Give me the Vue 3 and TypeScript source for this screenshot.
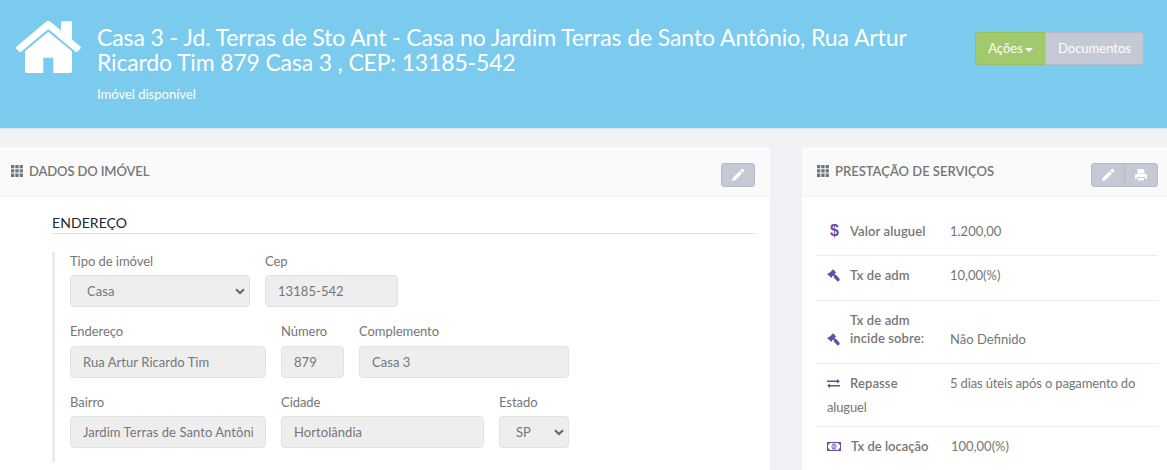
<template>
  <div class="page">
    <header class="hero">
      <svg class="hero-icon" viewBox="0 0 66 53" width="66" height="53" fill="#fff">
        <path d="M1.300 25.800 30.800 .9Q33.300 -.9 35.800 .9L46 9.400V1.500Q46 .2 47.300 .2H55.700Q57 .2 57 1.500V18.600L65.400 25.600Q66.300 26.500 65.500 27.400L62.300 30.700Q61.300 31.500 60.200 30.600L34.500 9Q33.300 8 32.100 9L6.400 30.600Q5.300 31.500 4.300 30.700L1 27.400Q.3 26.600 1.300 25.800Z" />
        <path d="M33.300 10.800 57 30.200V50.300Q57 52 55.300 52H38.300V36.700H28.300V52H11.700Q10 52 10 50.300V30.200Z" />
      </svg>
      <div class="hero-text">
        <h1>
          <span class="l1">Casa 3 - Jd. Terras de Sto Ant - Casa no Jardim Terras de Santo Antônio, Rua Artur</span><br>
          <span class="l2">Ricardo Tim 879 Casa 3 , CEP: 13185-542</span>
        </h1>
        <p>Imóvel disponível</p>
      </div>
      <div class="btn-group hero-actions">
        <button class="btn btn-success" type="button">Ações<i class="caret" /></button>
        <button class="btn btn-default" type="button">Documentos</button>
      </div>
    </header>

    <main class="columns">
      <section class="panel">
        <div class="panel-heading">
          <svg class="grid-icon" viewBox="0 0 12 12" width="12" height="12"><path :d="gridPath" /></svg>
          <h2 class="t-dados">DADOS DO IMÓVEL</h2>
          <div class="btn-group tools">
            <button class="btn btn-default btn-icon" type="button">
              <svg viewBox="0 0 14 14" width="14" height="14"><path :d="pencilPath" /></svg>
            </button>
          </div>
        </div>
        <div class="panel-body">
          <h3><span>ENDEREÇO</span></h3>
          <div class="address">
            <div v-for="(row, r) in rows" :key="r" class="form-row">
              <div v-for="field in row" :key="field.label" class="field" :style="{ width: field.width + 'px' }">
                <label>{{ field.label }}</label>
                <div v-if="field.select" class="control select">
                  <span>{{ field.value }}</span>
                  <svg viewBox="0 0 10 7" width="10" height="7"><path d="M1 1.200 5 5 9 1.200" /></svg>
                </div>
                <input v-else class="control" type="text" readonly :value="field.value">
              </div>
            </div>
          </div>
        </div>
      </section>

      <section class="panel panel-side">
        <div class="panel-heading">
          <svg class="grid-icon" viewBox="0 0 12 12" width="12" height="12"><path :d="gridPath" /></svg>
          <h2>PRESTAÇÃO DE SERVIÇOS</h2>
          <div class="btn-group tools">
            <button class="btn btn-default btn-icon" type="button">
              <svg viewBox="0 0 14 14" width="14" height="14"><path :d="pencilPath" /></svg>
            </button>
            <button class="btn btn-default btn-icon" type="button">
              <svg viewBox="0 0 14 14" width="14" height="14"><path fill-rule="evenodd" d="M3.500 1H9L10.500 2.500V5.500H3.500ZM2 6H12Q13 6 13 7V11H11V9H3V11H1V7Q1 6 2 6ZM4 10H10V12.500H4Z" /></svg>
            </button>
          </div>
        </div>
        <ul class="services">
          <li v-for="item in services" :key="item.label" :class="'item-' + item.icon">
            <span class="icon">
              <template v-if="item.icon === 'dollar'">$</template>
              <svg v-else-if="item.icon === 'money'" viewBox="0 0 14 9" width="14" height="9">
                <path fill-rule="evenodd" d="M0 0H14V9H0ZM1 2.700V6.300Q2.700 6.300 2.700 8H11.300Q11.300 6.300 13 6.300V2.700Q11.300 2.700 11.300 1H2.700Q2.700 2.700 1 2.700Z" />
                <path fill-rule="evenodd" d="M7 1.400A2.400 3.100 0 0 1 7 7.600A2.400 3.100 0 0 1 7 1.400ZM7 2.200A1.700 2.300 0 0 0 7 6.800A1.700 2.300 0 0 0 7 2.200ZM6.500 2.800H7.500V6.200H6.500Z" />
              </svg>
              <svg v-else-if="item.icon === 'exchange'" viewBox="0 0 13 9" width="13" height="9">
                <path d="M0 1.600H10V0L13 2.300 10 4.600V3H0ZM13 6H3V4.400L0 6.700 3 9V7.400H13Z" />
              </svg>
              <svg v-else viewBox="0 0 13 13" width="13" height="13">
                <path d="M5.300 .5 6.500 .7 9 3.200 8.600 4.300 8.100 4.200 7.500 5 8.500 6 9.200 5.900 12.600 9.800Q13 11 12 12 11 12.600 10 12L6.900 8.500 7 7.500 6.200 6.600 4.900 7.500 5.100 8.200 4.200 8.700 .5 5.400 .8 4.300 1.800 4.300 5.100 1.400Z" />
              </svg>
            </span><strong>{{ item.label }}</strong><span class="value">{{ item.value }}</span>
          </li>
        </ul>
      </section>
    </main>
  </div>
</template>

<script setup lang="ts">
// --- TYPES ---
type Field = {
  label: string
  value: string
  width: number
  select?: boolean
}

type Service = {
  icon: 'dollar' | 'gavel' | 'gavel-tall' | 'exchange' | 'money'
  label: string
  value: string
}

// --- ICONS ---
const gridPath = [0, 4.3, 8.6]
  .flatMap(y => [0, 4.3, 8.6].map(x => `M${x} ${y}h3.3v3.3h-3.3Z`))
  .join('')
const pencilPath = 'M1 13 1.800 9.700 8.600 2.900 11.100 5.400 4.300 12.200ZM9.300 2.200 10.500 1Q11.200 .5 11.900 1L13 2.100Q13.500 2.800 13 3.500L11.800 4.700Z'

// --- DATA ---
const rows: Field[][] = [
  [
    { label: 'Tipo de imóvel', value: 'Casa', width: 180, select: true },
    { label: 'Cep', value: '13185-542', width: 133 },
  ],
  [
    { label: 'Endereço', value: 'Rua Artur Ricardo Tim', width: 196 },
    { label: 'Número', value: '879', width: 63 },
    { label: 'Complemento', value: 'Casa 3', width: 210 },
  ],
  [
    { label: 'Bairro', value: 'Jardim Terras de Santo Antônio', width: 196 },
    { label: 'Cidade', value: 'Hortolândia', width: 203 },
    { label: 'Estado', value: 'SP', width: 70, select: true },
  ],
]

const services: Service[] = [
  { icon: 'dollar', label: 'Valor aluguel', value: '1.200,00' },
  { icon: 'gavel', label: 'Tx de adm', value: '10,00(%)' },
  { icon: 'gavel-tall', label: 'Tx de adm incide sobre:', value: 'Não Definido' },
  { icon: 'exchange', label: 'Repasse', value: '5 dias úteis após o pagamento do aluguel' },
  { icon: 'money', label: 'Tx de locação', value: '100,00(%)' },
]
</script>

<style>
body {
  margin: 0;
  background: #f0f1f4;
  overflow: hidden;
}
</style>

<style scoped>
.page {
  height: 470px;
  overflow: hidden;
  font-family: Lato, "Liberation Sans", sans-serif;
  font-size: 13px;
  line-height: 1.42857;
  color: #767676;
  background: #f0f1f4;
}
.page * {
  box-sizing: border-box;
}
h1, h2, h3, p, ul {
  margin: 0;
  padding: 0;
  font-weight: 400;
}

/* header */
.hero {
  display: flex;
  align-items: flex-start;
  height: 129px;
  padding: 0 23px 0 15px;
  color: #fff;
  background: #7bcbef;
  border-bottom: 1px solid #dce3ea;
}
.hero-icon {
  flex: none;
  margin-top: 21px;
}
.hero-text {
  flex: 1;
  margin-left: 16px;
  padding-top: 25px;
}
.hero-text h1 {
  font-size: 23px;
  line-height: 25px;
  white-space: nowrap;
}
.l1 {
  letter-spacing: -0.1px;
}
.l2 {
  letter-spacing: -0.16px;
}
.hero-text p {
  margin-top: 10px;
}
.hero-actions {
  margin-top: 32px;
}

/* buttons */
.btn-group {
  display: flex;
}
.btn {
  height: 33px;
  padding: 0 12px;
  font: inherit;
  color: #fff;
  white-space: nowrap;
  border: 1px solid;
}
.btn:first-child {
  border-radius: 3px 0 0 3px;
}
.btn:last-child {
  border-radius: 0 3px 3px 0;
}
.btn:only-child {
  border-radius: 3px;
}
.btn-success {
  width: 71px;
  background: #a2c96b;
  border-color: #95c058;
}
.btn-default {
  background: #c5c9d5;
  border-color: #b6bac9;
}
.hero-actions .btn-default {
  width: 99px;
  margin-left: -1px;
}
.caret {
  display: inline-block;
  margin-left: 2px;
  vertical-align: middle;
  border: 4px solid transparent;
  border-top-color: #fff;
  border-bottom: 0;
}
.btn-icon {
  display: flex;
  align-items: center;
  justify-content: center;
  width: 34px;
  height: 24px;
  padding: 0;
}
.btn-icon + .btn-icon {
  margin-left: -1px;
}
.btn-icon svg {
  fill: #fff;
}

/* panels */
.columns {
  display: flex;
  gap: 32px;
  margin-top: 18px;
}
.panel {
  width: 770px;
  height: 340px;
  background: #fff;
  border-radius: 0 3px 0 0;
  overflow: hidden;
}
.panel-side {
  width: 365px;
  border-radius: 3px 0 0 0;
}
.panel-heading {
  display: flex;
  align-items: flex-start;
  height: 50px;
  padding: 0 15px 0 11px;
  background: #fafafa;
  border-bottom: 1px solid #eff2f7;
}
.panel-side .panel-heading {
  padding: 0 9px 0 15px;
}
.grid-icon {
  margin-top: 18px;
  fill: #6b777f;
}
.panel-heading h2 {
  margin: 15px 0 0 6px;
  font-size: 13px;
  font-weight: 600;
  line-height: 18px;
}
.panel-heading .t-dados {
  letter-spacing: -0.12px;
}
.tools {
  margin: 16px 0 0 auto;
}

/* address form */
.panel-body {
  padding: 17px 15px 0 52px;
}
.panel-body h3 {
  height: 20px;
  font-size: 14px;
  line-height: 17px;
  letter-spacing: 0.08px;
  color: #222533;
  border-bottom: 1px solid #e2e2e2;
}
.address {
  margin-top: 17.700px;
  padding-left: 15px;
  border-left: 3px solid #ebebeb;
}
.form-row {
  display: flex;
  gap: 15px;
  padding-bottom: 15px;
}
.field label {
  display: block;
  margin-bottom: 5px;
  line-height: 18.570px;
  letter-spacing: -0.05px;
}
.control {
  display: block;
  width: 100%;
  height: 32px;
  padding: 0 12px;
  font: inherit;
  letter-spacing: 0.06px;
  color: #767676;
  background: #eee;
  border: 1px solid #e2e2e4;
  border-radius: 4px;
  outline: 0;
}
.select {
  display: flex;
  align-items: center;
  justify-content: space-between;
  padding: 0 4px 0 16px;
}
.select svg {
  fill: none;
  stroke: #666;
  stroke-width: 2;
}

/* services list */
.services {
  padding: 15px 9px 0 15px;
  list-style: none;
}
.services li {
  height: 45px;
  padding: 7px 10px 0;
  line-height: 24px;
  border-bottom: 1px solid #ececef;
}
.services .item-dollar {
  height: 44px;
}
.services .item-gavel-tall {
  height: 63px;
  padding-top: 10px;
}
.services .item-exchange {
  height: 63px;
}
.icon {
  display: inline-block;
  width: 23px;
  line-height: 18px;
}
.icon svg {
  display: inline-block;
  vertical-align: -2px;
  fill: #664ea3;
}
.item-exchange .icon svg,
.item-money .icon svg {
  vertical-align: 0;
}
.item-dollar .icon {
  padding-left: 3px;
  font: bold 16px/18px "Liberation Sans", sans-serif;
  color: #664ea3;
}
.item-money .icon {
  width: 24px;
}
strong {
  display: inline-block;
  width: 100px;
  padding-right: 20px;
  font-weight: 600;
  line-height: 18px;
  letter-spacing: 0.12px;
  white-space: nowrap;
}
.item-money strong {
  letter-spacing: 0;
}
.item-gavel-tall strong {
  vertical-align: 1px;
  white-space: normal;
}
.item-exchange .value {
  letter-spacing: -0.15px;
}
</style>
